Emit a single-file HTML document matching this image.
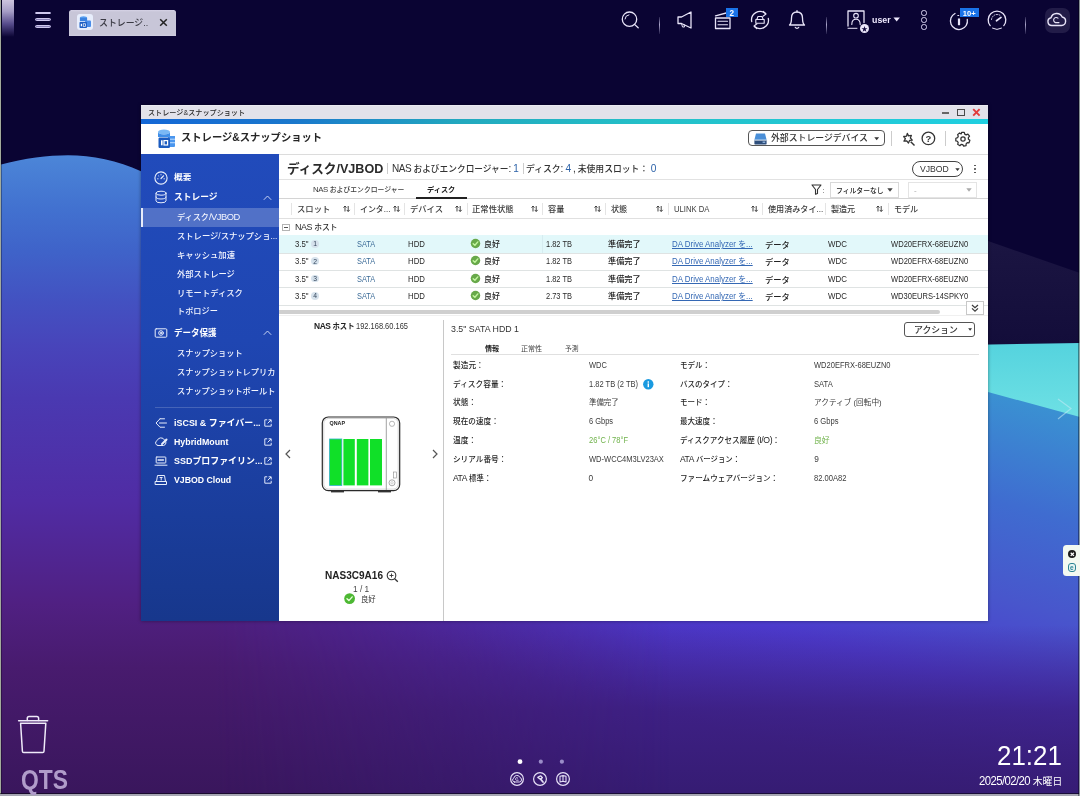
<!DOCTYPE html>
    <html lang="ja"><head><meta charset="utf-8"><title>QTS - ストレージ&amp;スナップショット</title>
    <style>
    html,body{margin:0;padding:0;}
    body{width:1080px;height:796px;overflow:hidden;background:#0a0433;font-family:"Liberation Sans","Noto Sans CJK JP",sans-serif;}
    #d{position:relative;width:1080px;height:796px;overflow:hidden;will-change:transform;}
    .r{position:absolute;display:block;}
    .t{position:absolute;white-space:nowrap;margin:0;}
    .bp{display:inline-block;width:0;height:0;}
    .l{font-size:.92em;}
    .L{font-size:1.15em;letter-spacing:-.05em;}
    svg{overflow:visible;}
    </style></head><body><div id="d">
    <svg class="r" style="left:0;top:0" width="1080" height="796" viewBox="0 0 1080 796">
    <defs>
    <linearGradient id="gL" x1="0" y1="155" x2="0" y2="796" gradientUnits="userSpaceOnUse">
    <stop offset="0" stop-color="#4c86d8"/><stop offset="0.08" stop-color="#4272d0"/><stop offset="0.15" stop-color="#3f63c9"/><stop offset="0.23" stop-color="#4351c1"/><stop offset="0.3" stop-color="#4844ba"/><stop offset="0.38" stop-color="#4a39b1"/><stop offset="0.54" stop-color="#502ca4"/><stop offset="0.7" stop-color="#502082"/><stop offset="0.8" stop-color="#481b6e"/><stop offset="1" stop-color="#39165c"/></linearGradient>
    <linearGradient id="gR" x1="1034" y1="400" x2="930" y2="786" gradientUnits="userSpaceOnUse">
    <stop offset="0" stop-color="#3a92d2"/><stop offset="0.27" stop-color="#3f6cd0"/><stop offset="0.5" stop-color="#4856cc"/><stop offset="0.72" stop-color="#4c3acc"/><stop offset="1" stop-color="#4a2cb0"/></linearGradient>
    <linearGradient id="gT" x1="0" y1="344" x2="0" y2="415" gradientUnits="userSpaceOnUse">
    <stop offset="0" stop-color="#55d3de"/><stop offset="1" stop-color="#6de0e4"/></linearGradient>
    <linearGradient id="gN" x1="0" y1="240" x2="0" y2="345" gradientUnits="userSpaceOnUse">
    <stop offset="0" stop-color="#1b1542"/><stop offset="1" stop-color="#130d3a"/></linearGradient>
    <linearGradient id="gB" x1="0" y1="0" x2="1080" y2="0" gradientUnits="userSpaceOnUse">
    <stop offset="0" stop-color="#4b1d78"/><stop offset="0.3" stop-color="#4a2490"/><stop offset="0.62" stop-color="#4a38c4"/><stop offset="0.85" stop-color="#4046c4"/><stop offset="1" stop-color="#3c50c6"/></linearGradient>
    <linearGradient id="gD" x1="0" y1="625" x2="0" y2="796" gradientUnits="userSpaceOnUse">
    <stop offset="0" stop-color="#351868" stop-opacity="0"/><stop offset="0.5" stop-color="#351868" stop-opacity="0.6"/><stop offset="1" stop-color="#331a6c" stop-opacity="0.9"/></linearGradient>
    <linearGradient id="gM" x1="0" y1="0" x2="1080" y2="0" gradientUnits="userSpaceOnUse"><stop offset="0.2" stop-color="#fff"/><stop offset="0.62" stop-color="#000"/></linearGradient>
    <linearGradient id="gH" x1="0" y1="0" x2="1080" y2="0" gradientUnits="userSpaceOnUse">
    <stop offset="0" stop-color="#3e1a66"/><stop offset="0.5" stop-color="#371a70"/><stop offset="1" stop-color="#33218a"/></linearGradient>
    </defs>
    <rect width="1080" height="796" fill="#0a0433"/>
    <path d="M300 200 C 700 200 900 215 988 241 L1080 273 L1080 350 L300 350 Z" fill="url(#gN)"/>
    <path d="M200 350 C 700 350 900 346 1080 343 L1080 420 L200 420 Z" fill="url(#gT)"/>
    <path d="M0 330 L540 330 C 760 350 900 372 988 392 L1080 417 L1080 796 L0 796 Z" fill="url(#gR)"/>
    <rect x="0" y="600" width="1080" height="196" fill="url(#gD)"/>
    <mask id="mL"><rect width="1080" height="796" fill="url(#gM)"/></mask>
    <path mask="url(#mL)" d="M0 164.8 C 25 158 48 155.2 68 155.2 C 92 155.2 118 160.5 141 171.3 C 200 200 260 250 340 290 C 420 325 520 330 700 330 L1080 330 L1080 796 L0 796 Z" fill="url(#gL)"/>
    </svg>
<div class="r" style="left:0px;top:0px;width:1.3px;height:796px;background:#a3ab9c;"></div>
<div class="r" style="left:1.3px;top:0px;width:0.8px;height:796px;background:rgba(0,0,0,.3);"></div>
<div class="r" style="left:0px;top:794.4px;width:1080px;height:1.6px;background:#a6a6b2;"></div>
<div class="r" style="left:0px;top:793.4px;width:1080px;height:1px;background:rgba(0,0,10,.55);"></div>
<div class="r" style="left:1078.9px;top:0px;width:1.1px;height:796px;background:rgba(150,165,160,.85);"></div>
<div class="r" style="left:1077.8px;top:0px;width:1.1px;height:796px;background:rgba(0,0,10,.4);"></div>
<div class="r" style="left:2px;top:0px;width:12px;height:37px;background:linear-gradient(180deg,#d8d0e8 0%,#b0a8d0 30%,#5a4f90 65%,rgba(10,4,48,0) 100%);opacity:.95;filter:blur(0.7px);"></div>
<div class="r" style="left:34.5px;top:11.5px;width:16.5px;height:2.8px;background:transparent;border:0.8px solid #cfc8ee;border-radius:2px;box-sizing:border-box;background:#8a82b8;"></div>
<div class="r" style="left:34.5px;top:18.200000000000003px;width:16.5px;height:2.8px;background:transparent;border:0.8px solid #cfc8ee;border-radius:2px;box-sizing:border-box;background:#8a82b8;"></div>
<div class="r" style="left:34.5px;top:25.0px;width:16.5px;height:2.8px;background:transparent;border:0.8px solid #cfc8ee;border-radius:2px;box-sizing:border-box;background:#8a82b8;"></div>
<div class="r" style="left:69px;top:10px;width:107px;height:26px;background:linear-gradient(180deg,#d6d3e6 0,#c8c6d8 2px,#c8c6d8 24px,#d0cee0 26px);border-radius:2.5px 2.5px 0 0;"></div>
<svg class="r" style="left:77px;top:14px;" width="16" height="16" viewBox="0 0 16 16" fill="none"><rect x="0" y="0" width="16" height="16" rx="3" fill="#e8eefc"/>
    <ellipse cx="6.500" cy="3.800" rx="3.600" ry="1.600" fill="#5aa0f0"/><rect x="2.900" y="3.800" width="7.200" height="3.400" fill="#3b82e0"/>
    <rect x="8" y="6.500" width="6" height="6.500" rx="1" fill="#4a8ce8"/>
    <rect x="2.500" y="8" width="7.500" height="6" rx="0.800" fill="#1f5fc4"/><rect x="3.800" y="9.800" width="1.200" height="2.500" fill="#fff"/><rect x="6.200" y="9.800" width="2.200" height="2.500" fill="none" stroke="#fff" stroke-width="0.700"/></svg>
<div class="t" style="top:16.00px;font-size:9.12px;line-height:14px;color:#3a3a44;transform:scaleX(0.9755);transform-origin:0 50%;left:98.60px;font-weight:500;">ストレージ..</div>
<svg class="r" style="left:158.5px;top:17.5px;" width="9" height="9" viewBox="0 0 9 9" fill="none"><path d="M1.200 1.200 L7.800 7.800 M7.800 1.200 L1.200 7.800" stroke="#222" stroke-width="1.500"/></svg>
<svg class="r" style="left:618.0px;top:7.5px;" width="24" height="24" viewBox="-12.0 -12.0 24 24" fill="none"><g stroke="#e8e4f8" stroke-width="1.3" stroke-linecap="round" stroke-linejoin="round"><circle cx="-0.500" cy="-0.800" r="7.200"/><path d="M-5 -1 A4.500 4.500 0 0 1 -1 -5.200" stroke-width="1"/><path d="M4.800 4.600 L8.200 7.800"/></g></svg>
<div class="r" style="left:658.6999999999999px;top:17px;width:1.2px;height:17px;background:linear-gradient(180deg,rgba(200,195,230,.15),rgba(210,205,240,.8) 45%,rgba(200,195,230,.1));"></div>
<div class="r" style="left:826.1px;top:17px;width:1.2px;height:17px;background:linear-gradient(180deg,rgba(200,195,230,.15),rgba(210,205,240,.8) 45%,rgba(200,195,230,.1));"></div>
<div class="r" style="left:1024.9px;top:17px;width:1.2px;height:17px;background:linear-gradient(180deg,rgba(200,195,230,.15),rgba(210,205,240,.8) 45%,rgba(200,195,230,.1));"></div>
<svg class="r" style="left:673.0px;top:8.0px;" width="24" height="24" viewBox="-12.0 -12.0 24 24" fill="none"><g stroke="#e8e4f8" stroke-width="1.3" stroke-linecap="round" stroke-linejoin="round"><path d="M-7 -3 L-3.500 -3 L6 -8 L6 8 L-3.500 3.500 L-7 3.500 Z"/><path d="M-3.500 3.500 L-2.500 7 L-0.500 7 L-1 4.500" stroke-width="1"/></g></svg>
<svg class="r" style="left:711.0px;top:9.0px;" width="24" height="24" viewBox="-12.0 -12.0 24 24" fill="none"><g stroke="#e8e4f8" stroke-width="1.3" stroke-linecap="round" stroke-linejoin="round"><path d="M-7.500 -3 L7 -3 L7 7.500 L-7.500 7.500 Z"/><path d="M-7.500 -5.200 L5 -8.500"/><path d="M-5 0.300 L4.500 0.300 M-5 3.800 L4.500 3.800" stroke-width="1.100"/></g></svg>
<div class="r" style="left:725.5px;top:8px;width:12.8px;height:9.4px;background:#1a73e8;"></div>
<div class="t" style="top:9.00px;font-size:8.2px;line-height:10px;color:#fff;left:531.90px;width:400px;text-align:center;font-weight:700;">2</div>
<svg class="r" style="left:748.4px;top:8.0px;" width="24" height="24" viewBox="-12.0 -12.0 24 24" fill="none"><g stroke="#e8e4f8" stroke-width="1.3" stroke-linecap="round" stroke-linejoin="round"><path d="M-8.300 1.500 A8.400 8.400 0 0 1 5.500 -6.400"/><path d="M8.300 -1.500 A8.400 8.400 0 0 1 -5.500 6.400"/><path d="M3.300 -8.600 L6 -6 L3 -3.800" stroke-width="1.100"/><path d="M-3.300 8.600 L-6 6 L-3 3.800" stroke-width="1.100"/><path d="M-3.200 -0.500 L-2 -3.500 L2 -3.500 L3.200 -0.500 Z M-4.200 -0.500 L4.200 -0.500 L4.200 3.200 L-4.200 3.200 Z" stroke-width="1.100"/></g></svg>
<svg class="r" style="left:785.3px;top:8.0px;" width="24" height="24" viewBox="-12.0 -12.0 24 24" fill="none"><g stroke="#e8e4f8" stroke-width="1.3" stroke-linecap="round" stroke-linejoin="round"><path d="M-7.500 5 C-5.500 3.500 -5.500 1 -5.500 -2 C-5.500 -6 -3 -8 0 -8 C3 -8 5.500 -6 5.500 -2 C5.500 1 5.500 3.500 7.500 5 Z"/><path d="M-1.800 7.200 A2 2 0 0 0 1.800 7.200" stroke-width="1.100"/><path d="M0 -8 L0 -9.300"/></g></svg>
<svg class="r" style="left:843.5px;top:7.0px;" width="24" height="24" viewBox="-12.0 -12.0 24 24" fill="none"><g stroke="#e8e4f8" stroke-width="1.3" stroke-linecap="round" stroke-linejoin="round"><path d="M-8 7 L-8 -8 L8 -8 L8 3.500" /><circle cx="0" cy="-3.300" r="2.300" stroke-width="1.100"/><path d="M-4.200 5.500 C-4.200 1.500 -2.500 0.300 0 0.300 C2.500 0.300 4.200 1.500 4.200 5.500" stroke-width="1.100"/><path d="M-8 9.300 L1 9.300" stroke-width="1"/></g></svg>
<div class="r" style="left:859.6px;top:23.6px;width:9.6px;height:9.6px;background:#ece8fa;border-radius:50%;"></div>
<div class="t" style="top:25.00px;font-size:6.5px;line-height:8px;color:#120a3c;left:664.40px;width:400px;text-align:center;">★</div>
<div class="t" style="top:14.00px;font-size:9px;line-height:12px;color:#efeaff;transform:scaleX(0.9781);transform-origin:0 50%;left:871.60px;font-weight:700;">user</div>
<svg class="r" style="left:893.2px;top:17.3px;" width="7.4" height="5" viewBox="0 0 7.4 5" fill="none"><path d="M0.500 0.500 L6.900 0.500 L3.700 4.600 Z" fill="#efeaff"/></svg>
<div class="r" style="left:921.3px;top:10.3px;width:5.4px;height:5.4px;background:transparent;border:1.1px solid #d8d2f0;border-radius:50%;box-sizing:border-box;"></div>
<div class="r" style="left:921.3px;top:17.3px;width:5.4px;height:5.4px;background:transparent;border:1.1px solid #d8d2f0;border-radius:50%;box-sizing:border-box;"></div>
<div class="r" style="left:921.3px;top:24.3px;width:5.4px;height:5.4px;background:transparent;border:1.1px solid #d8d2f0;border-radius:50%;box-sizing:border-box;"></div>
<svg class="r" style="left:947.0px;top:9.0px;" width="24" height="24" viewBox="-12.0 -12.0 24 24" fill="none"><g stroke="#e8e4f8" stroke-width="1.3" stroke-linecap="round" stroke-linejoin="round"><path d="M-4 -7.500 A8.500 8.500 0 1 0 8.300 -1.500" /><path d="M0 -2.500 L0 4.200" stroke-width="2.200" stroke-linecap="butt"/><path d="M-1.200 -5.500 L-0.200 -5.500" stroke-width="1"/></g></svg>
<div class="r" style="left:960px;top:8px;width:18.5px;height:9.4px;background:#1a73e8;"></div>
<div class="t" style="top:9.00px;font-size:7.6px;line-height:10px;color:#fff;left:769.20px;width:400px;text-align:center;font-weight:700;">10+</div>
<svg class="r" style="left:984.7px;top:8.0px;" width="24" height="24" viewBox="-12.0 -12.0 24 24" fill="none"><g stroke="#e8e4f8" stroke-width="1.3" stroke-linecap="round" stroke-linejoin="round"><path d="M-6.800 5.600 A8.800 8.800 0 1 1 6.800 5.600"/><path d="M-4.500 8.200 A9 9 0 0 0 4.500 8.200" stroke-width="1"/><path d="M-0.500 0.800 L4 -2.600" stroke-width="1.700"/><path d="M-5.500 -0.500 A5.600 5.600 0 0 1 3 -4.700" stroke-width="0.900" stroke-dasharray="1 1.500"/></g></svg>
<div class="r" style="left:1044.5px;top:7.5px;width:25.5px;height:25.5px;background:#221c48;border-radius:7px;"></div>
<svg class="r" style="left:1045.3px;top:8.3px;" width="24" height="24" viewBox="-12.0 -12.0 24 24" fill="none"><g stroke="#e8e4f8" stroke-width="1.4" stroke-linecap="round" stroke-linejoin="round"><path d="M-5 5.500 L4.500 5.500 A4.300 4.300 0 0 0 5.200 -3 A6 6 0 0 0 -6 -2.200 A3.900 3.900 0 0 0 -5 5.500 Z"/><path d="M2 2.600 L-1.500 2.600 A2.600 2.600 0 1 1 1 -1.800" stroke-width="1.100"/></g></svg>
<div class="r" style="left:141px;top:105px;width:847px;height:515.7px;background:#fff;box-shadow:0 0 3.5px rgba(0,0,0,.4);"></div>
<div class="r" style="left:141px;top:105px;width:847px;height:13.8px;background:linear-gradient(180deg,#efeff5 0,#e2e2ea 1.5px,#e2e2ea 100%);"></div>
<div class="t" style="top:108.00px;font-size:7.3px;line-height:10px;color:#2a2a2a;transform:scaleX(0.9750);transform-origin:0 50%;left:148.30px;font-weight:500;">ストレージ&amp;スナップショット</div>
<div class="r" style="left:942.3px;top:112.1px;width:7px;height:2px;background:#666;"></div>
<div class="r" style="left:957px;top:109px;width:7.8px;height:7.3px;background:transparent;border:1.7px solid #4a4a4a;box-sizing:border-box;"></div>
<svg class="r" style="left:972px;top:108.2px;" width="9" height="9" viewBox="0 0 9 9" fill="none"><path d="M1.2 1.2 L7.6 7.6 M7.6 1.2 L1.2 7.6" stroke="#e23a3a" stroke-width="1.9"/></svg>
<div class="r" style="left:141px;top:118.7px;width:847px;height:5.3px;background:linear-gradient(90deg,#1467d6 0%,#1a78cc 18%,#22a9be 38%,#24c0c8 60%,#20cfe0 100%);"></div>
<svg class="r" style="left:156.5px;top:127.5px;" width="19" height="21" viewBox="0 0 19 21" fill="none"><ellipse cx="7" cy="4" rx="6" ry="2.600" fill="#7ab8f5"/><path d="M1 4 L1 9 L13 9 L13 4 A6 2.600 0 0 1 1 4Z" fill="#3f8ee8"/>
    <path d="M11 8 L18 8 L18 18 A1 1 0 0 1 17 19 L11 19 Z" fill="#4a96ee"/><rect x="11.500" y="10.600" width="6.500" height="1.300" fill="#bcdcff" opacity=".8"/><rect x="11.500" y="14" width="6.500" height="1.300" fill="#bcdcff" opacity=".8"/>
    <rect x="1.500" y="9.500" width="11.500" height="10.500" rx="1.200" fill="#1c5cc0"/><rect x="4" y="12.300" width="1.600" height="5" fill="#fff"/><rect x="7" y="12.600" width="3.600" height="4.400" fill="none" stroke="#fff" stroke-width="1.200"/></svg>
<div class="t" style="top:130.00px;font-size:10.57px;line-height:14px;color:#262626;transform:scaleX(0.9749);transform-origin:0 50%;left:180.80px;font-weight:700;">ストレージ&amp;スナップショット</div>
<div class="r" style="left:748.3px;top:130.3px;width:136.4px;height:15.6px;background:#fff;border:1px solid #555;border-radius:4px;box-sizing:border-box;"></div>
<svg class="r" style="left:754px;top:132.6px;" width="13" height="12" viewBox="0 0 13 12" fill="none"><path d="M2 0.6 L11 0.6 L12.6 7 L0.4 7 Z" fill="#4a8fd8"/><rect x="0.4" y="7" width="12.2" height="4.4" rx="0.6" fill="#2f4f7c"/><rect x="0.4" y="6.6" width="12.2" height="1" fill="#e4ecf6"/><rect x="8.6" y="8.6" width="2.6" height="1.2" fill="#9fc4ee"/></svg>
<div class="t" style="top:132.00px;font-size:8.8px;line-height:12px;color:#333;transform:scaleX(1.0059);transform-origin:0 50%;left:770.80px;font-weight:500;">外部ストレージデバイス</div>
<svg class="r" style="left:873.5px;top:137px;" width="5.4" height="3.6" viewBox="0 0 5.4 3.6" fill="none"><path d="M0.300 0.300 L5.100 0.300 L2.700 3.300 Z" fill="#333"/></svg>
<div class="r" style="left:891px;top:131.2px;width:1px;height:14.6px;background:#ccc;"></div>
<div class="r" style="left:945px;top:131.2px;width:1px;height:14.6px;background:#ccc;"></div>
<svg class="r" style="left:901.3px;top:131.6px;" width="17" height="17" viewBox="0 0 17 17" fill="none"><g transform="scale(.9)" stroke="#333" stroke-width="1.4" stroke-linejoin="round" fill="none"><path d="M7 1.500 L8.400 4.300 L11.500 3.800 L10.400 6.700 L12.600 9 L9.500 9.400 L8.300 12.300 L6.400 9.800 L3.300 10.200 L4.900 7.500 L3 5 L6.100 4.700 Z"/><path d="M10.800 10.800 L15 15" stroke-width="1.600"/></g></svg>
<svg class="r" style="left:921px;top:131.4px;" width="14.8" height="14.8" viewBox="0 0 14.8 14.8" fill="none"><circle cx="7.400" cy="7.400" r="6.300" stroke="#333" stroke-width="1.300"/></svg>
<div class="t" style="top:133.00px;font-size:9.5px;line-height:12px;color:#333;left:728.40px;width:400px;text-align:center;font-weight:700;">?</div>
<svg class="r" style="left:953.5px;top:129.7px;" width="18" height="18" viewBox="0 0 18 18" fill="none"><g transform="translate(9 9) scale(.86)" stroke="#333" stroke-width="1.45" stroke-linejoin="round" fill="none"><path d="M-1.500 -7.800 L1.500 -7.800 L2 -5.700 L3.700 -4.800 L5.700 -5.700 L7.600 -3.300 L6.200 -1.600 L6.300 0.300 L8 1.500 L7 4.400 L4.900 4.300 L3.600 5.600 L3.600 7.700 L0.800 8.300 L-0.300 6.500 L-2.200 6.300 L-3.600 7.800 L-6.200 6.200 L-5.600 4.200 L-6.500 2.600 L-8.400 2.100 L-8.300 -0.900 L-6.300 -1.500 L-5.500 -3.200 L-6.300 -5.100 L-4 -7 L-2.200 -5.900 Z"/><circle cx="0" cy="0" r="2.500"/></g></svg>
<div class="r" style="left:279px;top:154px;width:709px;height:0.8px;background:#dcdcdc;"></div>
<div class="r" style="left:141px;top:154.3px;width:138px;height:466.40000000000003px;background:linear-gradient(180deg,#214bbb 0%,#1f46b2 40%,#1b3fa0 70%,#17378c 100%);"></div>
<svg class="r" style="left:153.4px;top:170.3px;" width="16" height="16" viewBox="-8 -8 16 16" fill="none"><g stroke="#e8eefc" stroke-width="1" stroke-linecap="round" stroke-linejoin="round"><circle r="6.1" stroke-width="1.15"/><path d="M0 0.5 L2.5 -2.2" stroke-width="1.2"/><path d="M-3.6 0.8 L-2.8 0.8 M3.6 0.8 L2.8 0.8 M0 -3.7 L0 -3 M-2.6 -2.2 L-2.1 -1.7" stroke-width="0.8"/></g></svg>
<div class="t" style="top:172.00px;font-size:7.7px;line-height:12px;color:#fff;transform:scaleX(1.1241);transform-origin:0 50%;left:174.00px;font-weight:700;">概要</div>
<svg class="r" style="left:153.3px;top:189.3px;" width="16" height="16" viewBox="-8 -8 16 16" fill="none"><g stroke="#e8eefc" stroke-width="1" stroke-linecap="round" stroke-linejoin="round"><ellipse cx="0" cy="-3.8" rx="5" ry="2"/><path d="M-5 -3.8 L-5 3.8 A5 2 0 0 0 5 3.8 L5 -3.8"/><path d="M-5 0 A5 2 0 0 0 5 0"/></g></svg>
<div class="t" style="top:191.00px;font-size:8.98px;line-height:12px;color:#fff;transform:scaleX(0.9738);transform-origin:0 50%;left:174.00px;font-weight:700;">ストレージ</div>
<svg class="r" style="left:263px;top:194.5px;" width="9" height="5.5" viewBox="0 0 9 5.5" fill="none"><path d="M0.8 4.8 L4.5 1 L8.2 4.8" stroke="#c8d4f4" stroke-width="1"/></svg>
<div class="r" style="left:141px;top:208px;width:138px;height:19px;background:rgba(255,255,255,.22);"></div>
<div class="r" style="left:141px;top:208px;width:2px;height:19px;background:#e8ecfa;"></div>
<div class="t" style="top:211.00px;font-size:8.34px;line-height:12px;color:#f4f6ff;transform:scaleX(0.9759);transform-origin:0 50%;left:176.60px;font-weight:500;">ディスク<span class="L">/VJBOD</span></div>
<div class="t" style="top:230.00px;font-size:8.52px;line-height:12px;color:#f4f6ff;transform:scaleX(0.9751);transform-origin:0 50%;left:176.60px;font-weight:500;">ストレージ/スナップショ...</div>
<div class="t" style="top:249.00px;font-size:8.49px;line-height:12px;color:#f4f6ff;transform:scaleX(0.9749);transform-origin:0 50%;left:176.60px;font-weight:500;">キャッシュ加速</div>
<div class="t" style="top:268.00px;font-size:8.51px;line-height:12px;color:#f4f6ff;transform:scaleX(0.9757);transform-origin:0 50%;left:176.60px;font-weight:500;">外部ストレージ</div>
<div class="t" style="top:287.00px;font-size:8.53px;line-height:12px;color:#f4f6ff;transform:scaleX(0.9758);transform-origin:0 50%;left:176.60px;font-weight:500;">リモートディスク</div>
<div class="t" style="top:305.00px;font-size:8.39px;line-height:12px;color:#f4f6ff;transform:scaleX(0.9767);transform-origin:0 50%;left:176.60px;font-weight:500;">トポロジー</div>
<div class="t" style="top:347.00px;font-size:8.43px;line-height:12px;color:#f4f6ff;transform:scaleX(0.9749);transform-origin:0 50%;left:176.60px;font-weight:500;">スナップショット</div>
<div class="t" style="top:366.00px;font-size:8.41px;line-height:12px;color:#f4f6ff;transform:scaleX(0.9755);transform-origin:0 50%;left:176.60px;font-weight:500;">スナップショットレプリカ</div>
<div class="t" style="top:385.00px;font-size:8.41px;line-height:12px;color:#f4f6ff;transform:scaleX(0.9755);transform-origin:0 50%;left:176.60px;font-weight:500;">スナップショットボールト</div>
<svg class="r" style="left:153.3px;top:324.7px;" width="16" height="16" viewBox="-8 -8 16 16" fill="none"><g stroke="#e8eefc" stroke-width="1" stroke-linecap="round" stroke-linejoin="round"><rect x="-5.8" y="-4.2" width="11.6" height="8.4" rx="1"/><circle r="2.3"/><circle r="0.6" fill="#e8eefc"/></g></svg>
<div class="t" style="top:327.00px;font-size:8.76px;line-height:12px;color:#fff;transform:scaleX(0.9737);transform-origin:0 50%;left:174.00px;font-weight:700;">データ保護</div>
<svg class="r" style="left:263px;top:330.2px;" width="9" height="5.5" viewBox="0 0 9 5.5" fill="none"><path d="M0.8 4.8 L4.5 1 L8.2 4.8" stroke="#c8d4f4" stroke-width="1"/></svg>
<div class="r" style="left:155px;top:406.5px;width:117px;height:0.8px;background:rgba(255,255,255,.18);"></div>
<svg class="r" style="left:153.3px;top:415.1px;" width="16" height="16" viewBox="-8 -8 16 16" fill="none"><g stroke="#e8eefc" stroke-width="1" stroke-linecap="round" stroke-linejoin="round"><path d="M-1 -4.2 L-5 0 L-1 4.2 L3.5 4.2 M-1 -4.2 L3.5 -4.2"/><path d="M-1.5 0 L5.5 0"/></g></svg>
<div class="t" style="top:417.00px;font-size:8.9px;line-height:12px;color:#fff;transform:scaleX(1.0055);transform-origin:0 50%;left:174.00px;font-weight:700;">iSCSI &amp; ファイバー...</div>
<svg class="r" style="left:264px;top:419.1px;" width="8" height="8" viewBox="0 0 8 8" fill="none"><path d="M3.2 0.8 L0.8 0.8 L0.8 7.2 L7.2 7.2 L7.2 4.8" stroke="#e0e8fc" stroke-width="1"/><path d="M4.6 0.8 L7.2 0.8 L7.2 3.4 M7 1 L3.6 4.4" stroke="#e0e8fc" stroke-width="1"/></svg>
<svg class="r" style="left:153.3px;top:434px;" width="16" height="16" viewBox="-8 -8 16 16" fill="none"><g stroke="#e8eefc" stroke-width="1" stroke-linecap="round" stroke-linejoin="round"><path d="M-3 3.5 L2.5 3.5 A3 3 0 0 0 3.5 -2 A4 4 0 0 0 -3.8 -1.5 A2.6 2.6 0 0 0 -3 3.5 Z"/><path d="M1 2 L5.5 -2.5" stroke-width="2"/></g></svg>
<div class="t" style="top:436.00px;font-size:8.9px;line-height:12px;color:#fff;transform:scaleX(0.9939);transform-origin:0 50%;left:174.00px;font-weight:700;">HybridMount</div>
<svg class="r" style="left:264px;top:438px;" width="8" height="8" viewBox="0 0 8 8" fill="none"><path d="M3.2 0.8 L0.8 0.8 L0.8 7.2 L7.2 7.2 L7.2 4.8" stroke="#e0e8fc" stroke-width="1"/><path d="M4.6 0.8 L7.2 0.8 L7.2 3.4 M7 1 L3.6 4.4" stroke="#e0e8fc" stroke-width="1"/></svg>
<svg class="r" style="left:153.3px;top:452.8px;" width="16" height="16" viewBox="-8 -8 16 16" fill="none"><g stroke="#e8eefc" stroke-width="1" stroke-linecap="round" stroke-linejoin="round"><rect x="-4.8" y="-4" width="9.6" height="6" rx="0.6"/><path d="M-6 4.2 L6 4.2"/><path d="M-2.8 -1 L2.8 -1" stroke-width="1.6" stroke-dasharray="1.2 0.8"/></g></svg>
<div class="t" style="top:455.00px;font-size:8.9px;line-height:12px;color:#fff;transform:scaleX(1.0070);transform-origin:0 50%;left:174.00px;font-weight:700;">SSDプロファイリン...</div>
<svg class="r" style="left:264px;top:456.8px;" width="8" height="8" viewBox="0 0 8 8" fill="none"><path d="M3.2 0.8 L0.8 0.8 L0.8 7.2 L7.2 7.2 L7.2 4.8" stroke="#e0e8fc" stroke-width="1"/><path d="M4.6 0.8 L7.2 0.8 L7.2 3.4 M7 1 L3.6 4.4" stroke="#e0e8fc" stroke-width="1"/></svg>
<svg class="r" style="left:153.3px;top:471.6px;" width="16" height="16" viewBox="-8 -8 16 16" fill="none"><g stroke="#e8eefc" stroke-width="1" stroke-linecap="round" stroke-linejoin="round"><path d="M-5.5 4.5 L5.5 4.5 L5.5 1.5 L-5.5 1.5 Z"/><path d="M-4.5 1.5 L-3.5 -4.5 L3.5 -4.5 L4.5 1.5"/><path d="M-1 -2.5 L1.2 -2.5 M0.2 -2.5 L0.2 0"/></g></svg>
<div class="t" style="top:474.00px;font-size:8.9px;line-height:12px;color:#fff;transform:scaleX(0.9830);transform-origin:0 50%;left:174.00px;font-weight:700;">VJBOD Cloud</div>
<svg class="r" style="left:264px;top:475.6px;" width="8" height="8" viewBox="0 0 8 8" fill="none"><path d="M3.2 0.8 L0.8 0.8 L0.8 7.2 L7.2 7.2 L7.2 4.8" stroke="#e0e8fc" stroke-width="1"/><path d="M4.6 0.8 L7.2 0.8 L7.2 3.4 M7 1 L3.6 4.4" stroke="#e0e8fc" stroke-width="1"/></svg>
<div class="t" style="top:161.00px;font-size:12.9px;line-height:16px;color:#2a2a2a;transform:scaleX(0.9761);transform-origin:0 50%;left:287.00px;font-weight:700;">ディスク/VJBOD</div>
<div class="r" style="left:387px;top:162.5px;width:0.8px;height:11px;background:#ccc;"></div>
<div class="t" style="top:163.00px;font-size:9px;line-height:12px;color:#333;transform:scaleX(0.9662);transform-origin:0 50%;left:391.70px;font-weight:500;"><span class="L">NAS</span> およびエンクロージャー<span class="L">:</span> <span style="color:#2c62a8"><span class="L">1</span></span></div>
<div class="r" style="left:522.6px;top:162.5px;width:0.8px;height:11px;background:#ccc;"></div>
<div class="t" style="top:163.00px;font-size:9px;line-height:12px;color:#333;transform:scaleX(0.9786);transform-origin:0 50%;left:526.00px;font-weight:500;">ディスク<span class="L">:</span> <span style="color:#2c62a8"><span class="L">4</span></span> <span class="L">,</span> 未使用スロット： <span style="color:#2c62a8"><span class="L">0</span></span></div>
<div class="r" style="left:912px;top:161.3px;width:51px;height:15.4px;background:#fff;border:1px solid #444;border-radius:8px;box-sizing:border-box;"></div>
<div class="t" style="top:163.00px;font-size:8.3px;line-height:12px;color:#333;transform:scaleX(1.0408);transform-origin:0 50%;left:919.80px;">VJBOD</div>
<svg class="r" style="left:955px;top:167.6px;" width="5" height="3.4" viewBox="0 0 5 3.4" fill="none"><path d="M0.3 0.3 L4.7 0.3 L2.5 3.1 Z" fill="#333"/></svg>
<div class="r" style="left:973.8px;top:164.7px;width:1.8px;height:1.8px;background:#444;border-radius:50%;"></div>
<div class="r" style="left:973.8px;top:168.1px;width:1.8px;height:1.8px;background:#444;border-radius:50%;"></div>
<div class="r" style="left:973.8px;top:171.5px;width:1.8px;height:1.8px;background:#444;border-radius:50%;"></div>
<div class="r" style="left:279px;top:179.3px;width:709px;height:0.8px;background:#e2e2e2;"></div>
<div class="t" style="top:185.00px;font-size:6.99px;line-height:10px;color:#3c3c3c;transform:scaleX(0.9758);transform-origin:0 50%;left:312.70px;font-weight:500;"><span class="L">NAS</span> およびエンクロージャー</div>
<div class="t" style="top:185.00px;font-size:7.39px;line-height:10px;color:#222;transform:scaleX(0.9764);transform-origin:0 50%;left:427.00px;font-weight:700;">ディスク</div>
<div class="r" style="left:279px;top:197.8px;width:709px;height:0.8px;background:#d4d4d4;"></div>
<div class="r" style="left:416.3px;top:197.4px;width:50.5px;height:1.5px;background:#222;"></div>
<svg class="r" style="left:810.5px;top:184px;" width="11" height="11" viewBox="0 0 11 11" fill="none"><path d="M1 1 L10 1 L6.5 5.5 L6.5 9.5 L4.5 10.2 L4.5 5.5 Z" stroke="#333" stroke-width="1.1" stroke-linejoin="round"/></svg>
<div class="t" style="top:186.00px;font-size:8px;line-height:10px;color:#555;left:822.50px;">:</div>
<div class="r" style="left:829.5px;top:181.7px;width:69px;height:16.3px;background:#fff;border:1px solid #d9d9d9;box-sizing:border-box;"></div>
<div class="t" style="top:186.00px;font-size:7.0px;line-height:10px;color:#222;transform:scaleX(0.9739);transform-origin:0 50%;left:836.00px;font-weight:500;">フィルターなし</div>
<svg class="r" style="left:887.3px;top:188.2px;" width="6" height="4" viewBox="0 0 6 4" fill="none"><path d="M0.3 0.3 L5.7 0.3 L3 3.7 Z" fill="#444"/></svg>
<div class="r" style="left:907.5px;top:181.7px;width:69.2px;height:16.3px;background:#fff;border:1px solid #e4e4e4;box-sizing:border-box;"></div>
<div class="t" style="top:186.00px;font-size:8px;line-height:10px;color:#aaa;left:914.00px;">-</div>
<svg class="r" style="left:965.5px;top:188.2px;" width="6" height="4" viewBox="0 0 6 4" fill="none"><path d="M0.3 0.3 L5.7 0.3 L3 3.7 Z" fill="#aaa"/></svg>
<div class="t" style="top:204.00px;font-size:8.5px;line-height:10px;color:#3c3c3c;transform:scaleX(0.9819);transform-origin:0 50%;left:296.50px;font-weight:500;">スロット</div>
<svg class="r" style="left:342.59999999999997px;top:205.0px;" width="7.2" height="7.5" viewBox="0 0 7.2 7.5" fill="none"><path d="M2 6.5 L2 1 M0.5 2.6 L2 1 L3.5 2.6" stroke="#3a3a3a" stroke-width="0.95"/><path d="M5.2 1 L5.2 6.5 M3.7 4.9 L5.2 6.5 L6.7 4.9" stroke="#3a3a3a" stroke-width="0.95"/></svg>
<div class="t" style="top:205.00px;font-size:8.13px;line-height:10px;color:#3c3c3c;transform:scaleX(0.9757);transform-origin:0 50%;left:359.80px;font-weight:500;">インタ...</div>
<svg class="r" style="left:392.59999999999997px;top:205.0px;" width="7.2" height="7.5" viewBox="0 0 7.2 7.5" fill="none"><path d="M2 6.5 L2 1 M0.5 2.6 L2 1 L3.5 2.6" stroke="#3a3a3a" stroke-width="0.95"/><path d="M5.2 1 L5.2 6.5 M3.7 4.9 L5.2 6.5 L6.7 4.9" stroke="#3a3a3a" stroke-width="0.95"/></svg>
<div class="t" style="top:204.00px;font-size:8.5px;line-height:10px;color:#3c3c3c;transform:scaleX(0.9778);transform-origin:0 50%;left:409.80px;font-weight:500;">デバイス</div>
<svg class="r" style="left:455.4px;top:205.0px;" width="7.2" height="7.5" viewBox="0 0 7.2 7.5" fill="none"><path d="M2 6.5 L2 1 M0.5 2.6 L2 1 L3.5 2.6" stroke="#3a3a3a" stroke-width="0.95"/><path d="M5.2 1 L5.2 6.5 M3.7 4.9 L5.2 6.5 L6.7 4.9" stroke="#3a3a3a" stroke-width="0.95"/></svg>
<div class="t" style="top:204.00px;font-size:8.5px;line-height:10px;color:#3c3c3c;transform:scaleX(0.9808);transform-origin:0 50%;left:472.30px;font-weight:500;">正常性状態</div>
<svg class="r" style="left:530.6px;top:205.0px;" width="7.2" height="7.5" viewBox="0 0 7.2 7.5" fill="none"><path d="M2 6.5 L2 1 M0.5 2.6 L2 1 L3.5 2.6" stroke="#3a3a3a" stroke-width="0.95"/><path d="M5.2 1 L5.2 6.5 M3.7 4.9 L5.2 6.5 L6.7 4.9" stroke="#3a3a3a" stroke-width="0.95"/></svg>
<div class="t" style="top:204.00px;font-size:8.5px;line-height:10px;color:#3c3c3c;transform:scaleX(0.9638);transform-origin:0 50%;left:548.00px;font-weight:500;">容量</div>
<svg class="r" style="left:593.9px;top:205.0px;" width="7.2" height="7.5" viewBox="0 0 7.2 7.5" fill="none"><path d="M2 6.5 L2 1 M0.5 2.6 L2 1 L3.5 2.6" stroke="#3a3a3a" stroke-width="0.95"/><path d="M5.2 1 L5.2 6.5 M3.7 4.9 L5.2 6.5 L6.7 4.9" stroke="#3a3a3a" stroke-width="0.95"/></svg>
<div class="t" style="top:204.00px;font-size:8.3px;line-height:10px;color:#3c3c3c;transform:scaleX(0.9754);transform-origin:0 50%;left:611.00px;font-weight:500;">状態</div>
<svg class="r" style="left:656.4px;top:205.0px;" width="7.2" height="7.5" viewBox="0 0 7.2 7.5" fill="none"><path d="M2 6.5 L2 1 M0.5 2.6 L2 1 L3.5 2.6" stroke="#3a3a3a" stroke-width="0.95"/><path d="M5.2 1 L5.2 6.5 M3.7 4.9 L5.2 6.5 L6.7 4.9" stroke="#3a3a3a" stroke-width="0.95"/></svg>
<div class="t" style="top:204.00px;font-size:8.5px;line-height:10px;color:#3c3c3c;transform:scaleX(0.9026);transform-origin:0 50%;left:673.50px;font-weight:500;">ULINK DA</div>
<svg class="r" style="left:750.6px;top:205.0px;" width="7.2" height="7.5" viewBox="0 0 7.2 7.5" fill="none"><path d="M2 6.5 L2 1 M0.5 2.6 L2 1 L3.5 2.6" stroke="#3a3a3a" stroke-width="0.95"/><path d="M5.2 1 L5.2 6.5 M3.7 4.9 L5.2 6.5 L6.7 4.9" stroke="#3a3a3a" stroke-width="0.95"/></svg>
<div class="t" style="top:205.00px;font-size:8.28px;line-height:10px;color:#3c3c3c;transform:scaleX(0.9773);transform-origin:0 50%;left:768.00px;font-weight:500;">使用済みタイ...</div>
<div class="t" style="top:205.00px;font-size:8.27px;line-height:10px;color:#3c3c3c;transform:scaleX(0.9753);transform-origin:0 50%;left:831.00px;font-weight:500;">製造元</div>
<svg class="r" style="left:876.4px;top:205.0px;" width="7.2" height="7.5" viewBox="0 0 7.2 7.5" fill="none"><path d="M2 6.5 L2 1 M0.5 2.6 L2 1 L3.5 2.6" stroke="#3a3a3a" stroke-width="0.95"/><path d="M5.2 1 L5.2 6.5 M3.7 4.9 L5.2 6.5 L6.7 4.9" stroke="#3a3a3a" stroke-width="0.95"/></svg>
<div class="t" style="top:205.00px;font-size:8.27px;line-height:10px;color:#3c3c3c;transform:scaleX(0.9753);transform-origin:0 50%;left:893.50px;font-weight:500;">モデル</div>
<div class="r" style="left:290.6px;top:202.5px;width:0.8px;height:12.5px;background:#e4e4e4;"></div>
<div class="r" style="left:353.90000000000003px;top:202.5px;width:0.8px;height:12.5px;background:#e4e4e4;"></div>
<div class="r" style="left:404.3px;top:202.5px;width:0.8px;height:12.5px;background:#e4e4e4;"></div>
<div class="r" style="left:467.1px;top:202.5px;width:0.8px;height:12.5px;background:#e4e4e4;"></div>
<div class="r" style="left:542.1px;top:202.5px;width:0.8px;height:12.5px;background:#e4e4e4;"></div>
<div class="r" style="left:605.1px;top:202.5px;width:0.8px;height:12.5px;background:#e4e4e4;"></div>
<div class="r" style="left:668.3000000000001px;top:202.5px;width:0.8px;height:12.5px;background:#e4e4e4;"></div>
<div class="r" style="left:762.4px;top:202.5px;width:0.8px;height:12.5px;background:#e4e4e4;"></div>
<div class="r" style="left:825.3000000000001px;top:202.5px;width:0.8px;height:12.5px;background:#e4e4e4;"></div>
<div class="r" style="left:888.1px;top:202.5px;width:0.8px;height:12.5px;background:#e4e4e4;"></div>
<div class="r" style="left:279px;top:218.3px;width:709px;height:0.8px;background:#e0e0e0;"></div>
<div class="r" style="left:282.3px;top:223.5px;width:7.4px;height:7.4px;background:#fff;border:0.9px solid #b4b4b4;box-sizing:border-box;"></div>
<div class="r" style="left:284.3px;top:226.8px;width:3.4px;height:0.9px;background:#555;"></div>
<div class="t" style="top:222.00px;font-size:7.96px;line-height:10px;color:#2a2a2a;transform:scaleX(0.9747);transform-origin:0 50%;left:294.50px;font-weight:500;"><span class="L">NAS</span> ホスト</div>
<div class="r" style="left:279px;top:235.3px;width:709px;height:17.3px;background:#e2f8fa;"></div>
<div class="r" style="left:279px;top:252.5px;width:709px;height:0.8px;background:#dfe3e3;"></div>
<div class="t" style="top:240.00px;font-size:8.25px;line-height:10px;color:#2a2a2a;transform:scaleX(0.9440);transform-origin:0 50%;left:294.50px;">3.5&quot;</div>
<div class="r" style="left:311.3px;top:240.0px;width:7.8px;height:7.8px;background:#d6e2ec;border-radius:50%;"></div>
<div class="t" style="top:239.00px;font-size:6.8px;line-height:10px;color:#34465c;left:115.20px;width:400px;text-align:center;">1</div>
<div class="t" style="top:240.00px;font-size:8.25px;line-height:10px;color:#3c6c98;transform:scaleX(0.8953);transform-origin:0 50%;left:357.30px;">SATA</div>
<div class="t" style="top:240.00px;font-size:8.25px;line-height:10px;color:#2a2a2a;transform:scaleX(0.9455);transform-origin:0 50%;left:407.50px;">HDD</div>
<svg class="r" style="left:469.9px;top:238.0px;" width="11" height="11" viewBox="0 0 11 11" fill="none"><circle cx="5.5" cy="5.5" r="4.75" fill="#68a94a"/><path d="M3.2 5.7 L4.9 7.3 L7.8 3.9" stroke="#c4f7a0" stroke-width="1.4" stroke-linecap="round" stroke-linejoin="round"/></svg>
<div class="t" style="top:240.00px;font-size:8.15px;line-height:10px;color:#222;transform:scaleX(0.9775);transform-origin:0 50%;left:483.50px;font-weight:500;">良好</div>
<div class="t" style="top:240.00px;font-size:8.25px;line-height:10px;color:#2a2a2a;transform:scaleX(0.9009);transform-origin:0 50%;left:546.00px;">1.82 TB</div>
<div class="t" style="top:239.00px;font-size:8.3px;line-height:10px;color:#222;transform:scaleX(0.9848);transform-origin:0 50%;left:608.00px;font-weight:500;">準備完了</div>
<div class="t" style="top:240.00px;font-size:8.25px;line-height:10px;color:#3468b4;transform:scaleX(0.9618);transform-origin:0 50%;left:671.50px;text-decoration:underline;text-decoration-thickness:0.6px;text-underline-offset:1px;">DA Drive Analyzer を...</div>
<div class="t" style="top:240.00px;font-size:8.51px;line-height:10px;color:#222;transform:scaleX(0.9759);transform-origin:0 50%;left:765.30px;font-weight:500;">データ</div>
<div class="t" style="top:240.00px;font-size:8.25px;line-height:10px;color:#2a2a2a;transform:scaleX(0.9592);transform-origin:0 50%;left:828.00px;">WDC</div>
<div class="t" style="top:240.00px;font-size:8.25px;line-height:10px;color:#2a2a2a;transform:scaleX(0.9201);transform-origin:0 50%;left:891.00px;">WD20EFRX-68EUZN0</div>
<div class="r" style="left:279px;top:269.7px;width:709px;height:0.8px;background:#dfe3e3;"></div>
<div class="t" style="top:257.00px;font-size:8.25px;line-height:10px;color:#2a2a2a;transform:scaleX(0.9440);transform-origin:0 50%;left:294.50px;">3.5&quot;</div>
<div class="r" style="left:311.3px;top:257.2px;width:7.8px;height:7.8px;background:#d6e2ec;border-radius:50%;"></div>
<div class="t" style="top:257.00px;font-size:6.8px;line-height:10px;color:#34465c;left:115.20px;width:400px;text-align:center;">2</div>
<div class="t" style="top:257.00px;font-size:8.25px;line-height:10px;color:#3c6c98;transform:scaleX(0.8953);transform-origin:0 50%;left:357.30px;">SATA</div>
<div class="t" style="top:257.00px;font-size:8.25px;line-height:10px;color:#2a2a2a;transform:scaleX(0.9455);transform-origin:0 50%;left:407.50px;">HDD</div>
<svg class="r" style="left:469.9px;top:255.2px;" width="11" height="11" viewBox="0 0 11 11" fill="none"><circle cx="5.5" cy="5.5" r="4.75" fill="#68a94a"/><path d="M3.2 5.7 L4.9 7.3 L7.8 3.9" stroke="#c4f7a0" stroke-width="1.4" stroke-linecap="round" stroke-linejoin="round"/></svg>
<div class="t" style="top:257.00px;font-size:8.15px;line-height:10px;color:#222;transform:scaleX(0.9775);transform-origin:0 50%;left:483.50px;font-weight:500;">良好</div>
<div class="t" style="top:257.00px;font-size:8.25px;line-height:10px;color:#2a2a2a;transform:scaleX(0.9009);transform-origin:0 50%;left:546.00px;">1.82 TB</div>
<div class="t" style="top:256.00px;font-size:8.3px;line-height:10px;color:#222;transform:scaleX(0.9848);transform-origin:0 50%;left:608.00px;font-weight:500;">準備完了</div>
<div class="t" style="top:257.00px;font-size:8.25px;line-height:10px;color:#3468b4;transform:scaleX(0.9618);transform-origin:0 50%;left:671.50px;text-decoration:underline;text-decoration-thickness:0.6px;text-underline-offset:1px;">DA Drive Analyzer を...</div>
<div class="t" style="top:257.00px;font-size:8.51px;line-height:10px;color:#222;transform:scaleX(0.9759);transform-origin:0 50%;left:765.30px;font-weight:500;">データ</div>
<div class="t" style="top:257.00px;font-size:8.25px;line-height:10px;color:#2a2a2a;transform:scaleX(0.9592);transform-origin:0 50%;left:828.00px;">WDC</div>
<div class="t" style="top:257.00px;font-size:8.25px;line-height:10px;color:#2a2a2a;transform:scaleX(0.9201);transform-origin:0 50%;left:891.00px;">WD20EFRX-68EUZN0</div>
<div class="r" style="left:279px;top:287.1px;width:709px;height:0.8px;background:#dfe3e3;"></div>
<div class="t" style="top:275.00px;font-size:8.25px;line-height:10px;color:#2a2a2a;transform:scaleX(0.9440);transform-origin:0 50%;left:294.50px;">3.5&quot;</div>
<div class="r" style="left:311.3px;top:274.6px;width:7.8px;height:7.8px;background:#d6e2ec;border-radius:50%;"></div>
<div class="t" style="top:274.00px;font-size:6.8px;line-height:10px;color:#34465c;left:115.20px;width:400px;text-align:center;">3</div>
<div class="t" style="top:275.00px;font-size:8.25px;line-height:10px;color:#3c6c98;transform:scaleX(0.8953);transform-origin:0 50%;left:357.30px;">SATA</div>
<div class="t" style="top:275.00px;font-size:8.25px;line-height:10px;color:#2a2a2a;transform:scaleX(0.9455);transform-origin:0 50%;left:407.50px;">HDD</div>
<svg class="r" style="left:469.9px;top:272.6px;" width="11" height="11" viewBox="0 0 11 11" fill="none"><circle cx="5.5" cy="5.5" r="4.75" fill="#68a94a"/><path d="M3.2 5.7 L4.9 7.3 L7.8 3.9" stroke="#c4f7a0" stroke-width="1.4" stroke-linecap="round" stroke-linejoin="round"/></svg>
<div class="t" style="top:275.00px;font-size:8.15px;line-height:10px;color:#222;transform:scaleX(0.9775);transform-origin:0 50%;left:483.50px;font-weight:500;">良好</div>
<div class="t" style="top:275.00px;font-size:8.25px;line-height:10px;color:#2a2a2a;transform:scaleX(0.9009);transform-origin:0 50%;left:546.00px;">1.82 TB</div>
<div class="t" style="top:274.00px;font-size:8.3px;line-height:10px;color:#222;transform:scaleX(0.9848);transform-origin:0 50%;left:608.00px;font-weight:500;">準備完了</div>
<div class="t" style="top:275.00px;font-size:8.25px;line-height:10px;color:#3468b4;transform:scaleX(0.9618);transform-origin:0 50%;left:671.50px;text-decoration:underline;text-decoration-thickness:0.6px;text-underline-offset:1px;">DA Drive Analyzer を...</div>
<div class="t" style="top:275.00px;font-size:8.51px;line-height:10px;color:#222;transform:scaleX(0.9759);transform-origin:0 50%;left:765.30px;font-weight:500;">データ</div>
<div class="t" style="top:275.00px;font-size:8.25px;line-height:10px;color:#2a2a2a;transform:scaleX(0.9592);transform-origin:0 50%;left:828.00px;">WDC</div>
<div class="t" style="top:275.00px;font-size:8.25px;line-height:10px;color:#2a2a2a;transform:scaleX(0.9201);transform-origin:0 50%;left:891.00px;">WD20EFRX-68EUZN0</div>
<div class="r" style="left:279px;top:304.5px;width:709px;height:0.8px;background:#dfe3e3;"></div>
<div class="t" style="top:292.00px;font-size:8.25px;line-height:10px;color:#2a2a2a;transform:scaleX(0.9440);transform-origin:0 50%;left:294.50px;">3.5&quot;</div>
<div class="r" style="left:311.3px;top:292.0px;width:7.8px;height:7.8px;background:#d6e2ec;border-radius:50%;"></div>
<div class="t" style="top:291.00px;font-size:6.8px;line-height:10px;color:#34465c;left:115.20px;width:400px;text-align:center;">4</div>
<div class="t" style="top:292.00px;font-size:8.25px;line-height:10px;color:#3c6c98;transform:scaleX(0.8953);transform-origin:0 50%;left:357.30px;">SATA</div>
<div class="t" style="top:292.00px;font-size:8.25px;line-height:10px;color:#2a2a2a;transform:scaleX(0.9455);transform-origin:0 50%;left:407.50px;">HDD</div>
<svg class="r" style="left:469.9px;top:290.0px;" width="11" height="11" viewBox="0 0 11 11" fill="none"><circle cx="5.5" cy="5.5" r="4.75" fill="#68a94a"/><path d="M3.2 5.7 L4.9 7.3 L7.8 3.9" stroke="#c4f7a0" stroke-width="1.4" stroke-linecap="round" stroke-linejoin="round"/></svg>
<div class="t" style="top:292.00px;font-size:8.15px;line-height:10px;color:#222;transform:scaleX(0.9775);transform-origin:0 50%;left:483.50px;font-weight:500;">良好</div>
<div class="t" style="top:292.00px;font-size:8.25px;line-height:10px;color:#2a2a2a;transform:scaleX(0.9009);transform-origin:0 50%;left:546.00px;">2.73 TB</div>
<div class="t" style="top:291.00px;font-size:8.3px;line-height:10px;color:#222;transform:scaleX(0.9848);transform-origin:0 50%;left:608.00px;font-weight:500;">準備完了</div>
<div class="t" style="top:292.00px;font-size:8.25px;line-height:10px;color:#3468b4;transform:scaleX(0.9618);transform-origin:0 50%;left:671.50px;text-decoration:underline;text-decoration-thickness:0.6px;text-underline-offset:1px;">DA Drive Analyzer を...</div>
<div class="t" style="top:292.00px;font-size:8.51px;line-height:10px;color:#222;transform:scaleX(0.9759);transform-origin:0 50%;left:765.30px;font-weight:500;">データ</div>
<div class="t" style="top:292.00px;font-size:8.25px;line-height:10px;color:#2a2a2a;transform:scaleX(0.9592);transform-origin:0 50%;left:828.00px;">WDC</div>
<div class="t" style="top:292.00px;font-size:8.25px;line-height:10px;color:#2a2a2a;transform:scaleX(0.9150);transform-origin:0 50%;left:891.00px;">WD30EURS-14SPKY0</div>
<div class="r" style="left:542.2px;top:235.3px;width:0.8px;height:17.4px;background:#d6ecf0;"></div>
<div class="r" style="left:279px;top:309.6px;width:661px;height:4.8px;background:#cfcfcf;border-radius:0 2.4px 2.4px 0;"></div>
<div class="r" style="left:279px;top:314.6px;width:709px;height:0.8px;background:#f0f0f0;"></div>
<div class="r" style="left:966.4px;top:301.4px;width:17.2px;height:13.6px;background:#fff;border:1px solid #c8c8c8;box-sizing:border-box;"></div>
<svg class="r" style="left:971px;top:304px;" width="8" height="8.5" viewBox="0 0 8 8.5" fill="none"><path d="M1 1 L4 3.8 L7 1 M1 4.4 L4 7.2 L7 4.4" stroke="#3a3a3a" stroke-width="1.2"/></svg>
<div class="t" style="top:321.00px;font-size:7.52px;line-height:10px;color:#222;transform:scaleX(0.9744);transform-origin:0 50%;left:313.60px;font-weight:700;"><span class="L">NAS</span> ホスト</div>
<div class="t" style="top:322.00px;font-size:8.25px;line-height:10px;color:#333;transform:scaleX(0.9066);transform-origin:0 50%;left:356.30px;">192.168.60.165</div>
<div class="r" style="left:443px;top:320px;width:0.8px;height:300.70000000000005px;background:#c8c8c8;"></div>
<svg class="r" style="left:283.5px;top:449px;" width="8" height="10" viewBox="0 0 8 10" fill="none"><path d="M6 1 L2 5 L6 9" stroke="#555" stroke-width="1.200"/></svg>
<svg class="r" style="left:431px;top:449px;" width="8" height="10" viewBox="0 0 8 10" fill="none"><path d="M2 1 L6 5 L2 9" stroke="#555" stroke-width="1.200"/></svg>
<svg class="r" style="left:320px;top:415px;" width="82" height="79" viewBox="0 0 82 79" fill="none"><rect x="2.300" y="2" width="77.400" height="73.600" rx="6" fill="#fff" stroke="#2a2a2a" stroke-width="1.200"/>
    <rect x="3.800" y="3.500" width="74.400" height="70.600" rx="4.800" fill="none" stroke="#bbb" stroke-width="0.600"/>
    <path d="M66.300 3 L66.300 75" stroke="#999" stroke-width="0.900"/>
    <rect x="11" y="75.600" width="13" height="1.800" fill="#333"/><rect x="58" y="75.600" width="13" height="1.800" fill="#333"/>
    <rect x="9.600" y="24" width="12.200" height="46.400" fill="#10e028" stroke="#30b0c8" stroke-width="0.800"/>
    <rect x="23.400" y="24" width="11.400" height="46.400" fill="#10e028"/>
    <rect x="36.800" y="24" width="11.600" height="46.400" fill="#10e028"/>
    <rect x="50" y="24" width="12" height="46.400" fill="#10e028"/>
    <circle cx="72" cy="8.800" r="2.600" fill="#fff" stroke="#999" stroke-width="0.700"/>
    <circle cx="72" cy="67.800" r="3" fill="#fff" stroke="#888" stroke-width="0.700"/><circle cx="72" cy="67.800" r="1.200" fill="none" stroke="#aaa" stroke-width="0.500"/>
    <rect x="73.300" y="57" width="3.200" height="6" fill="#fff" stroke="#888" stroke-width="0.600"/>
    <text x="9.500" y="10.200" font-family="Liberation Sans, sans-serif" font-weight="700" font-size="4.600" fill="#222" textLength="15.500" lengthAdjust="spacingAndGlyphs">QNAP</text></svg>
<div class="t" style="top:570.00px;font-size:10.3px;line-height:12px;color:#222;transform:scaleX(0.9743);transform-origin:0 50%;left:324.80px;font-weight:700;">NAS3C9A16</div>
<svg class="r" style="left:385.5px;top:569.5px;" width="13" height="13" viewBox="0 0 13 13" fill="none"><circle cx="5.500" cy="5.500" r="4.300" stroke="#333" stroke-width="1.100"/><path d="M8.700 8.700 L11.800 11.800" stroke="#333" stroke-width="1.300"/><path d="M3.500 5.500 L7.500 5.500 M5.500 3.500 L5.500 7.500" stroke="#333" stroke-width="0.900"/></svg>
<div class="t" style="top:584.00px;font-size:8.4px;line-height:10px;color:#444;transform:scaleX(0.9941);transform-origin:0 50%;left:353.20px;">1 / 1</div>
<svg class="r" style="left:343.6px;top:593.1px;" width="11.2" height="11.2" viewBox="0 0 11.2 11.2" fill="none"><circle cx="5.6" cy="5.6" r="5.4" fill="#4db833"/><path d="M3 5.7 L4.9 7.6 L8.2 3.9" stroke="#eaffdc" stroke-width="1.4" stroke-linecap="round" stroke-linejoin="round"/></svg>
<div class="t" style="top:595.00px;font-size:7.6px;line-height:10px;color:#333;transform:scaleX(0.9613);transform-origin:0 50%;left:360.60px;">良好</div>
<div class="t" style="top:323.00px;font-size:9.6px;line-height:12px;color:#333;transform:scaleX(0.9193);transform-origin:0 50%;left:451.00px;">3.5&quot; SATA HDD 1</div>
<div class="r" style="left:903.7px;top:322.2px;width:71.3px;height:14.6px;background:#fff;border:1px solid #555;border-radius:3px;box-sizing:border-box;"></div>
<div class="t" style="top:325.00px;font-size:8.8px;line-height:10px;color:#333;transform:scaleX(1.0058);transform-origin:0 50%;left:914.20px;font-weight:500;">アクション</div>
<svg class="r" style="left:968px;top:328.3px;" width="4.2" height="3" viewBox="0 0 4.2 3" fill="none"><path d="M0.2 0.2 L4 0.2 L2.1 2.8 Z" fill="#333"/></svg>
<div class="t" style="top:344.00px;font-size:7.29px;line-height:10px;color:#222;transform:scaleX(0.9741);transform-origin:0 50%;left:484.80px;font-weight:700;">情報</div>
<div class="t" style="top:344.00px;font-size:7.25px;line-height:10px;color:#444;transform:scaleX(0.9740);transform-origin:0 50%;left:521.00px;">正常性</div>
<div class="t" style="top:344.00px;font-size:7.03px;line-height:10px;color:#444;transform:scaleX(0.9753);transform-origin:0 50%;left:564.80px;">予測</div>
<div class="r" style="left:451px;top:354.3px;width:527.6px;height:1.2px;background:#e0e0e0;"></div>
<div class="t" style="top:361.00px;font-size:7.9px;line-height:10px;color:#262626;transform:scaleX(0.9754);transform-origin:0 50%;left:452.80px;font-weight:500;">製造元：</div>
<div class="t" style="top:360.00px;font-size:8.3px;line-height:10px;color:#3c3c3c;transform:scaleX(0.9028);transform-origin:0 50%;left:588.50px;">WDC</div>
<div class="t" style="top:361.00px;font-size:7.72px;line-height:10px;color:#262626;transform:scaleX(0.9744);transform-origin:0 50%;left:679.60px;font-weight:500;">モデル：</div>
<div class="t" style="top:360.00px;font-size:8.3px;line-height:10px;color:#3c3c3c;transform:scaleX(0.9067);transform-origin:0 50%;left:814.20px;">WD20EFRX-68EUZN0</div>
<div class="t" style="top:380.00px;font-size:7.89px;line-height:10px;color:#262626;transform:scaleX(0.9766);transform-origin:0 50%;left:452.80px;font-weight:500;">ディスク容量：</div>
<div class="t" style="top:379.00px;font-size:8.3px;line-height:10px;color:#3c3c3c;transform:scaleX(0.9074);transform-origin:0 50%;left:588.50px;">1.82 TB (2 TB)</div>
<div class="t" style="top:380.00px;font-size:7.68px;line-height:10px;color:#262626;transform:scaleX(0.9757);transform-origin:0 50%;left:679.60px;font-weight:500;">バスのタイプ：</div>
<div class="t" style="top:379.00px;font-size:8.3px;line-height:10px;color:#3c3c3c;transform:scaleX(0.9143);transform-origin:0 50%;left:814.20px;">SATA</div>
<div class="t" style="top:398.00px;font-size:7.97px;line-height:10px;color:#262626;transform:scaleX(0.9746);transform-origin:0 50%;left:452.80px;font-weight:500;">状態：</div>
<div class="t" style="top:398.00px;font-size:7.59px;line-height:10px;color:#3c3c3c;transform:scaleX(0.9760);transform-origin:0 50%;left:588.50px;">準備完了</div>
<div class="t" style="top:398.00px;font-size:7.72px;line-height:10px;color:#262626;transform:scaleX(0.9744);transform-origin:0 50%;left:679.60px;font-weight:500;">モード：</div>
<div class="t" style="top:398.00px;font-size:7.85px;line-height:10px;color:#3c3c3c;transform:scaleX(0.9755);transform-origin:0 50%;left:814.20px;">アクティブ (回転中)</div>
<div class="t" style="top:417.00px;font-size:7.83px;line-height:10px;color:#262626;transform:scaleX(0.9748);transform-origin:0 50%;left:452.80px;font-weight:500;">現在の速度：</div>
<div class="t" style="top:416.00px;font-size:8.3px;line-height:10px;color:#3c3c3c;transform:scaleX(0.9004);transform-origin:0 50%;left:588.50px;">6 Gbps</div>
<div class="t" style="top:417.00px;font-size:7.74px;line-height:10px;color:#262626;transform:scaleX(0.9749);transform-origin:0 50%;left:679.60px;font-weight:500;">最大速度：</div>
<div class="t" style="top:416.00px;font-size:8.3px;line-height:10px;color:#3c3c3c;transform:scaleX(0.9191);transform-origin:0 50%;left:814.20px;">6 Gbps</div>
<div class="t" style="top:436.00px;font-size:7.97px;line-height:10px;color:#262626;transform:scaleX(0.9746);transform-origin:0 50%;left:452.80px;font-weight:500;">温度：</div>
<div class="t" style="top:435.00px;font-size:8.3px;line-height:10px;color:#6fb24a;transform:scaleX(0.9077);transform-origin:0 50%;left:588.50px;">26°C / 78°F</div>
<div class="t" style="top:435.00px;font-size:7.77px;line-height:10px;color:#262626;transform:scaleX(0.9749);transform-origin:0 50%;left:679.60px;font-weight:500;">ディスクアクセス履歴 <span class="L">(I/O)</span>：</div>
<div class="t" style="top:436.00px;font-size:8.05px;line-height:10px;color:#6fb24a;transform:scaleX(0.9755);transform-origin:0 50%;left:814.20px;">良好</div>
<div class="t" style="top:455.00px;font-size:7.83px;line-height:10px;color:#262626;transform:scaleX(0.9738);transform-origin:0 50%;left:452.80px;font-weight:500;">シリアル番号：</div>
<div class="t" style="top:454.00px;font-size:8.3px;line-height:10px;color:#3c3c3c;transform:scaleX(0.9093);transform-origin:0 50%;left:588.50px;">WD-WCC4M3LV23AX</div>
<div class="t" style="top:454.00px;font-size:7.56px;line-height:10px;color:#262626;transform:scaleX(0.9749);transform-origin:0 50%;left:679.60px;font-weight:500;"><span class="L">ATA</span> バージョン：</div>
<div class="t" style="top:454.00px;font-size:8.3px;line-height:10px;color:#3c3c3c;left:814.20px;">9</div>
<div class="t" style="top:473.00px;font-size:7.6px;line-height:10px;color:#262626;transform:scaleX(0.9746);transform-origin:0 50%;left:452.80px;font-weight:500;"><span class="L">ATA</span> 標準：</div>
<div class="t" style="top:473.00px;font-size:8.3px;line-height:10px;color:#3c3c3c;left:588.50px;">0</div>
<div class="t" style="top:474.00px;font-size:7.81px;line-height:10px;color:#262626;transform:scaleX(0.9756);transform-origin:0 50%;left:679.60px;font-weight:500;">ファームウェアバージョン：</div>
<div class="t" style="top:473.00px;font-size:8.3px;line-height:10px;color:#3c3c3c;transform:scaleX(0.9147);transform-origin:0 50%;left:814.20px;">82.00A82</div>
<svg class="r" style="left:643px;top:378.6px;" width="10.6" height="10.6" viewBox="0 0 10.6 10.6" fill="none"><circle cx="5.3" cy="5.3" r="5.2" fill="#1a9ae0"/><rect x="4.6" y="4.4" width="1.4" height="3.8" fill="#fff"/><rect x="4.6" y="2.3" width="1.4" height="1.4" fill="#fff"/></svg>
<svg class="r" style="left:17px;top:715px;" width="33" height="40" viewBox="0 0 33 40" fill="none"><g stroke="#efeaf9" stroke-width="1.5" stroke-linejoin="round" stroke-linecap="round"><path d="M1.6 5.7 L30.6 5.7"/><path d="M10.3 5.5 L10.3 3.3 A1.8 1.8 0 0 1 12.1 1.5 L19.8 1.5 A1.8 1.8 0 0 1 21.600 3.3 L21.600 5.5"/><path d="M3.6 8.300 L28.8 8.300 L27 36.300 A1.3 1.3 0 0 1 25.700 37.500 L6.700 37.500 A1.3 1.3 0 0 1 5.400 36.300 Z"/></g></svg>
<div class="t" style="top:766.00px;font-size:27px;line-height:28px;color:#b09cca;transform:scaleX(0.8466);transform-origin:0 50%;left:20.80px;font-weight:700;font-family:"DejaVu Sans","Liberation Sans",sans-serif;">QTS</div>
<svg class="r" style="left:510px;top:755px;" width="60" height="14" viewBox="0 0 60 14" fill="none"><circle cx="10" cy="6.7" r="2.4" fill="#fff"/><circle cx="30.8" cy="6.7" r="2.1" fill="#9a8cc8"/><circle cx="51.9" cy="6.7" r="2.1" fill="#9a8cc8"/></svg>
<svg class="r" style="left:509.4px;top:770.9px;" width="16" height="16" viewBox="0 0 16 16" fill="none"><g transform="translate(8 8)" stroke="#e6e0f6" stroke-width="1.1" stroke-linecap="round" stroke-linejoin="round"><circle r="6.4" stroke-width="1.2"/><path d="M-2.6 3 L2.4 3 A2.3 2.3 0 0 0 2.9 -1.5 A3.1 3.1 0 0 0 -3.1 -1 A2.1 2.1 0 0 0 -2.6 3 Z" stroke-width="1"/><path d="M1.2 1.2 L-0.6 1.2 A1.3 1.3 0 1 1 0.7 -1" stroke-width="0.9"/></g></svg>
<svg class="r" style="left:532px;top:770.9px;" width="16" height="16" viewBox="0 0 16 16" fill="none"><g transform="translate(8 8)" stroke="#e6e0f6" stroke-width="1.1" stroke-linecap="round" stroke-linejoin="round"><circle r="6.4" stroke-width="1.2"/><path d="M-2.2 -1.6 L0.6 -3.2 L2.4 -1.2 L0.4 0.2 Z" stroke-width="1.3"/><path d="M0.6 0.2 L3 3" stroke-width="1.8"/></g></svg>
<svg class="r" style="left:554.8px;top:770.9px;" width="16" height="16" viewBox="0 0 16 16" fill="none"><g transform="translate(8 8)" stroke="#e6e0f6" stroke-width="1.1" stroke-linecap="round" stroke-linejoin="round"><circle r="6.4" stroke-width="1.2"/><path d="M-3 -2.8 L-3 3 L0 2.2 L3 3 L3 -2.8 L0 -3.4 Z M0 -3.4 L0 2.2" stroke-width="1.1"/></g></svg>
<div class="t" style="top:741.00px;font-size:27.2px;line-height:30px;color:#fff;transform:scaleX(0.9523);transform-origin:0 50%;left:996.60px;">21:21</div>
<div class="t" style="top:775.00px;font-size:10.6px;line-height:12px;color:#fff;transform:scaleX(0.9293);transform-origin:0 50%;left:979.20px;"><span class="L">2025/02/20</span> 木曜日</div>
<div class="r" style="left:1062.6px;top:545px;width:20px;height:31px;background:#f3f9f1;border-radius:3.5px;"></div>
<div class="r" style="left:1067.8px;top:550px;width:8.2px;height:8.2px;background:#1c1c1c;border-radius:50%;"></div>
<svg class="r" style="left:1069.6px;top:551.8px;" width="4.6" height="4.6" viewBox="0 0 4.6 4.6" fill="none"><path d="M0.7 0.7 L3.9 3.9 M3.9 0.7 L0.7 3.9" stroke="#fff" stroke-width="1.3"/></svg>
<div class="r" style="left:1067.5px;top:562.9px;width:8.8px;height:8.8px;background:#e4f4f2;border-radius:3px;border:1.2px solid #2a8494;box-sizing:border-box;"></div>
<div class="t" style="top:564.00px;font-size:6.5px;line-height:8px;color:#2a8494;left:871.90px;width:400px;text-align:center;font-weight:700;">e</div>
<svg class="r" style="left:1056px;top:397px;" width="18" height="24" viewBox="0 0 18 24" fill="none"><path d="M2 2 L15 11.500 L2 22" stroke="rgba(200,235,245,.55)" stroke-width="1.200"/></svg>
    </div></body></html>
